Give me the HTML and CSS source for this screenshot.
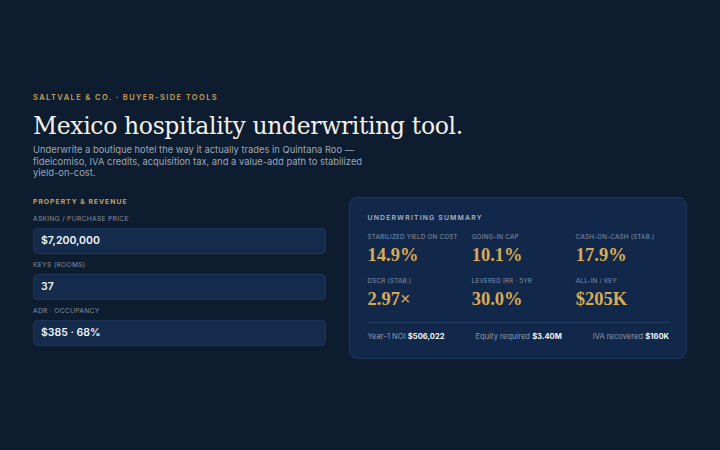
FILE: index.html
```html
<!DOCTYPE html>
<html lang="en">
<head>
    <meta charset="UTF-8">
    <meta name="viewport" content="width=device-width, initial-scale=1.0">
    <title>Mexico hospitality underwriting tool</title>
    <link rel="stylesheet" href="styles.css">
</head>
<body>
    <div class="page">
        <div class="eyebrow">Saltvale &amp; Co. · Buyer-side tools</div>
        <h1 class="title">Mexico hospitality underwriting tool.</h1>
        <p class="lede">Underwrite a boutique hotel the way it actually trades in Quintana Roo — fideicomiso, IVA credits, acquisition tax, and a value-add path to stabilized yield-on-cost.</p>

        <div class="columns">
            <div class="inputs">
                <div class="section-title">Property &amp; Revenue</div>

                <label class="field-label">Asking / purchase price</label>
                <div class="field">$7,200,000</div>

                <label class="field-label">Keys (rooms)</label>
                <div class="field">37</div>

                <label class="field-label">ADR · Occupancy</label>
                <div class="field">$385 · 68%</div>
            </div>

            <div class="summary">
                <div class="summary-title">Underwriting summary</div>
                <div class="metrics">
                    <div class="metric">
                        <div class="metric-label">Stabilized yield on cost</div>
                        <div class="metric-value">14.9%</div>
                    </div>
                    <div class="metric">
                        <div class="metric-label">Going-in cap</div>
                        <div class="metric-value">10.1%</div>
                    </div>
                    <div class="metric">
                        <div class="metric-label">Cash-on-cash (stab.)</div>
                        <div class="metric-value">17.9%</div>
                    </div>
                    <div class="metric">
                        <div class="metric-label">DSCR (stab.)</div>
                        <div class="metric-value">2.97×</div>
                    </div>
                    <div class="metric">
                        <div class="metric-label">Levered IRR · 5yr</div>
                        <div class="metric-value">30.0%</div>
                    </div>
                    <div class="metric">
                        <div class="metric-label">All-in / key</div>
                        <div class="metric-value">$205K</div>
                    </div>
                </div>
                <div class="totals">
                    <span>Year-1 NOI <b>$506,022</b></span>
                    <span>Equity required <b>$3.40M</b></span>
                    <span>IVA recovered <b>$160K</b></span>
                </div>
            </div>
        </div>
    </div>
</body>
</html>
```

FILE: styles.css
```css
body {
    margin: 0;
    background-color: #0e1c2f;
    font-family: Inter, "Noto Sans", sans-serif;
    color: #e8edf3;
}
.page {
    padding: 93px 33px 0 33px;
}
.eyebrow {
    font-size: 7.5px;
    font-weight: 600;
    letter-spacing: 1.4px;
    text-transform: uppercase;
    color: #c9a154;
}
.title {
    margin: 8px 0 0 0;
    font-family: "DejaVu Serif", serif;
    font-weight: 400;
    font-size: 23.5px;
    line-height: 32px;
    letter-spacing: -0.35px;
    color: #f3f1ea;
}
.lede {
    margin: 2px 0 0 0;
    width: 330px;
    font-size: 9.4px;
    line-height: 11.6px;
    color: #9ba7b8;
}
.columns {
    display: flex;
    align-items: flex-start;
    gap: 23px;
    margin-top: 18px;
}
.inputs {
    width: 293px;
}
.section-title {
    font-size: 6.8px;
    line-height: 9px;
    font-weight: 700;
    letter-spacing: 1px;
    text-transform: uppercase;
    color: #c9a154;
    margin-bottom: 9px;
}
.field-label {
    display: block;
    font-size: 6.7px;
    line-height: 9px;
    letter-spacing: 0.3px;
    text-transform: uppercase;
    color: #8592a4;
    margin-bottom: 4px;
}
.field {
    height: 24px;
    line-height: 24px;
    padding: 0 7px;
    background: #142b4b;
    border: 1px solid #1c3558;
    border-radius: 4px;
    font-size: 10.5px;
    font-weight: 600;
    color: #f1f4f8;
    margin-bottom: 7px;
}
.summary {
    width: 302px;
    padding: 15.5px 17px 16px 18px;
    background: #12284a;
    border: 1px solid #1d3658;
    border-radius: 8px;
}
.summary-title {
    font-size: 6.8px;
    line-height: 9px;
    font-weight: 600;
    letter-spacing: 1.2px;
    text-transform: uppercase;
    color: #a9b4c3;
}
.metrics {
    display: grid;
    grid-template-columns: repeat(3, 1fr);
    column-gap: 11px;
    row-gap: 11.5px;
    margin-top: 11px;
}
.metric-label {
    font-size: 6.3px;
    line-height: 9px;
    text-transform: uppercase;
    letter-spacing: 0.2px;
    color: #8592a4;
    white-space: nowrap;
    margin-bottom: 1.5px;
}
.metric-value {
    font-family: "Liberation Serif", serif;
    font-weight: 700;
    font-size: 18.5px;
    line-height: 22px;
    color: #d9ab55;
}
.totals {
    display: flex;
    justify-content: space-between;
    margin-top: 12px;
    padding-top: 9px;
    border-top: 1px solid #223d60;
    font-size: 7.6px;
    line-height: 10px;
    color: #8e9bb0;
}
.totals b {
    color: #f1f4f8;
    font-weight: 700;
}
```
